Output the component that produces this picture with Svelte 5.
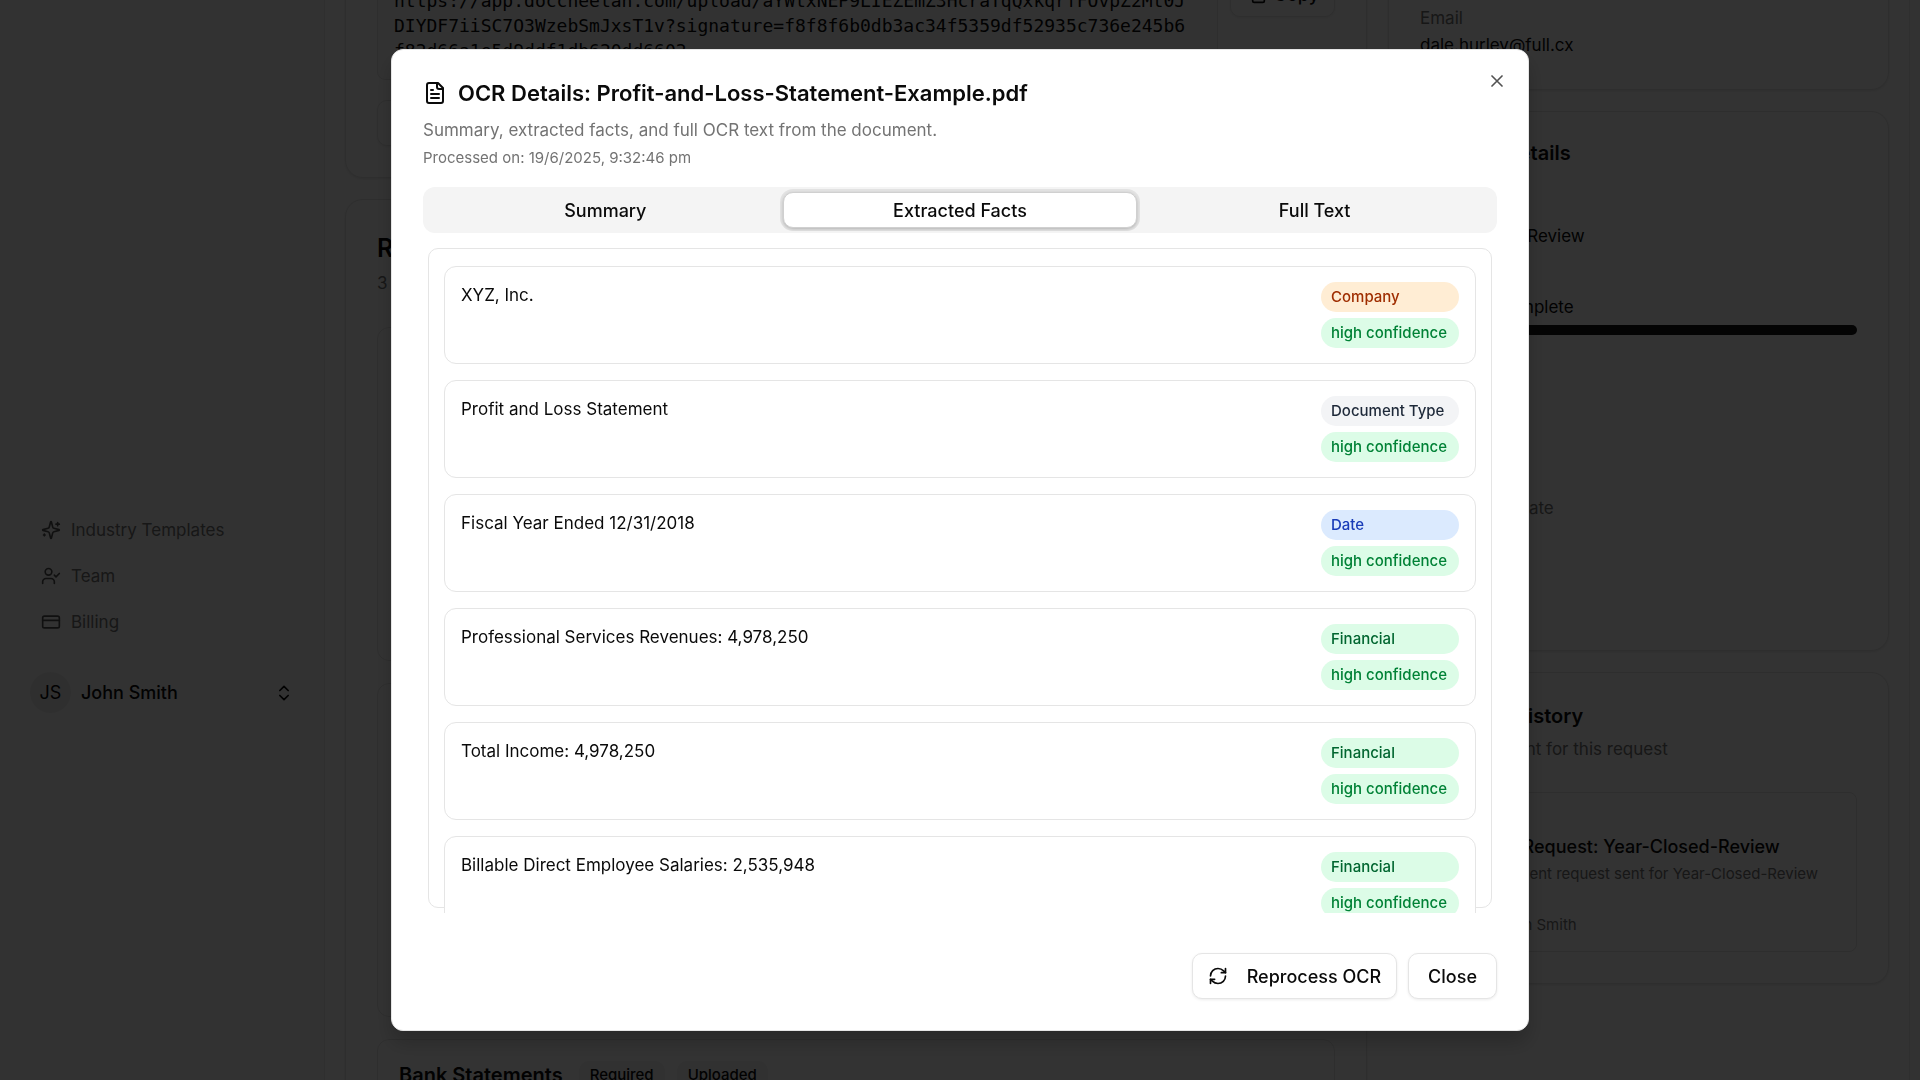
<script lang="ts">
	type Kind = 'company' | 'doctype' | 'date' | 'financial';

	interface Fact {
		text: string;
		kind: Kind;
	}

	const kindLabels: Record<Kind, string> = {
		company: 'Company',
		doctype: 'Document Type',
		date: 'Date',
		financial: 'Financial'
	};

	const facts: Fact[] = [
		{ text: 'XYZ, Inc.', kind: 'company' },
		{ text: 'Profit and Loss Statement', kind: 'doctype' },
		{ text: 'Fiscal Year Ended 12/31/2018', kind: 'date' },
		{ text: 'Professional Services Revenues: 4,978,250', kind: 'financial' },
		{ text: 'Total Income: 4,978,250', kind: 'financial' },
		{ text: 'Billable Direct Employee Salaries: 2,535,948', kind: 'financial' }
	];

	const tabs = ['Summary', 'Extracted Facts', 'Full Text'];
	let activeTab = $state('Extracted Facts');

	const uploadUrl =
		'https://app.doccheetah.com/upload/aYWtxNEP9LIEZEmZ3HcraTqQxkqrfFOvpZ2Mt0JDIYDF7iiSC7O3WzebSmJxsT1v?signature=f8f8f6b0db3ac34f5359df52935c736e245b6f82d66a1e5d9ddf1db620dd6602';
</script>

<div class="page">
	<aside class="sidebar">
		<div class="sidebar-inner">
			<nav>
				<a href="#templates">
					<svg class="icon" viewBox="0 0 24 24">
						<path d="M9.937 15.5A2 2 0 0 0 8.5 14.063l-6.135-1.582a.5.5 0 0 1 0-.962L8.5 9.936A2 2 0 0 0 9.937 8.5l1.582-6.135a.5.5 0 0 1 .963 0L14.063 8.5A2 2 0 0 0 15.5 9.937l6.135 1.581a.5.5 0 0 1 0 .964L15.5 14.063a2 2 0 0 0-1.437 1.437l-1.582 6.135a.5.5 0 0 1-.963 0z" />
						<path d="M20 3v4M22 5h-4M4 17v2M5 18H3" />
					</svg>
					Industry Templates
				</a>
				<a href="#team">
					<svg class="icon" viewBox="0 0 24 24">
						<path d="m16 11 2 2 4-4M16 21v-2a4 4 0 0 0-4-4H6a4 4 0 0 0-4 4v2" />
						<circle cx="9" cy="7" r="4" />
					</svg>
					Team
				</a>
				<a href="#billing">
					<svg class="icon" viewBox="0 0 24 24">
						<rect x="2" y="5" width="20" height="14" rx="2" />
						<path d="M2 10h20" />
					</svg>
					Billing
				</a>
			</nav>
			<button class="user">
				<span class="avatar">JS</span>
				<span class="user-name">John Smith</span>
				<svg class="icon" viewBox="0 0 24 24">
					<path d="m7 15 5 5 5-5M7 9l5-5 5 5" />
				</svg>
			</button>
		</div>
	</aside>

	<main>
		<div class="column">
			<section class="card">
				<div class="link-row">
					<code>{uploadUrl}</code>
					<button class="btn">
						<svg class="icon" viewBox="0 0 24 24">
							<rect x="8" y="8" width="14" height="14" rx="2" />
							<path d="M4 16c-1.100 0-2-.9-2-2V4c0-1.100.9-2 2-2h10c1.100 0 2 .9 2 2" />
						</svg>
						Copy
					</button>
				</div>
				<button class="btn link-action">Send</button>
			</section>

			<section class="card">
				<h2>Requested Documents</h2>
				<p class="count">3 documents</p>
				<div class="documents">
					<div class="document"></div>
					<div class="document"></div>
					<div class="document">
						<h3>Bank Statements</h3>
						<span class="tag">Required</span>
						<span class="tag">Uploaded</span>
					</div>
				</div>
			</section>
		</div>

		<div class="column">
			<section class="card contact">
				<p>Dale Hurley</p>
				<dl>
					<div><dt>Email</dt><dd>dale.hurley@full.cx</dd></div>
				</dl>
			</section>

			<section class="card details">
				<h3>Request Details</h3>
				<dl>
					<div><dt>Title</dt><dd>Year-Closed-Review</dd></div>
					<div>
						<dt>Progress</dt>
						<dd>Requests complete</dd>
						<div class="progress"></div>
					</div>
					<div><dt>Status</dt><dd>Open</dd></div>
					<div><dt>Created</dt><dd>19/6/2025</dd></div>
					<div><dt>Completion Date</dt><dd>19/7/2025</dd></div>
					<div><dt>Reminders</dt><dd>On</dd></div>
				</dl>
			</section>

			<section class="card history">
				<h3>Message History</h3>
				<p class="card-desc">Messages sent for this request</p>
				<article class="message">
					<h4>New Request: Year-Closed-Review</h4>
					<p>Document request sent for Year-Closed-Review</p>
					<p class="sender">to John Smith</p>
				</article>
			</section>
		</div>
	</main>
</div>

<div class="overlay">
	<div class="dialog" role="dialog" aria-modal="true" aria-labelledby="dialog-title">
		<button class="dismiss" aria-label="Close dialog">
			<svg class="icon" viewBox="0 0 24 24"><path d="M18 6 6 18M6 6l12 12" /></svg>
		</button>

		<header>
			<h1 id="dialog-title">
				<svg class="icon title-icon" viewBox="0 0 24 24">
					<path d="M15 2H6a2 2 0 0 0-2 2v16a2 2 0 0 0 2 2h12a2 2 0 0 0 2-2V7z" />
					<path d="M14 2v4a2 2 0 0 0 2 2h4M10 9H8M16 13H8M16 17H8" />
				</svg>
				OCR Details: Profit-and-Loss-Statement-Example.pdf
			</h1>
			<p class="description">Summary, extracted facts, and full OCR text from the document.</p>
			<p class="processed">Processed on: 19/6/2025, 9:32:46 pm</p>
		</header>

		<div class="tabs" role="tablist">
			{#each tabs as tab}
				<button
					role="tab"
					class:active={tab === activeTab}
					aria-selected={tab === activeTab}
					onclick={() => (activeTab = tab)}
				>
					{tab}
				</button>
			{/each}
		</div>

		<div class="panel">
			<div class="frame">
				{#each facts as fact}
					<div class="fact">
						<p>{fact.text}</p>
						<div class="badges">
							<span class="badge {fact.kind}">{kindLabels[fact.kind]}</span>
							<span class="badge confidence">high confidence</span>
						</div>
					</div>
				{/each}
			</div>
		</div>

		<footer>
			<button class="btn reprocess">
				<svg class="icon" viewBox="0 0 24 24">
					<path d="M3 12a9 9 0 0 1 9-9 9.750 9.750 0 0 1 6.740 2.740L21 8" />
					<path d="M21 3v5h-5M21 12a9 9 0 0 1-9 9 9.750 9.750 0 0 1-6.740-2.740L3 16" />
					<path d="M8 16H3v5" />
				</svg>
				Reprocess OCR
			</button>
			<button class="btn">Close</button>
		</footer>
	</div>
</div>

<style>
	:global(body) {
		font-family: Inter, 'Liberation Sans', sans-serif;
		font-size: 17px;
		line-height: 25px;
		color: #0a0a0a;
		background: #fafafa;
	}

	h1,
	h2,
	h3,
	h4,
	p,
	dl,
	dd {
		margin: 0;
	}

	button {
		font: inherit;
		font-size: 18px;
		color: inherit;
		cursor: pointer;
	}

	.icon {
		width: 20px;
		height: 20px;
		flex: none;
		fill: none;
		stroke: currentColor;
		stroke-width: 2;
		stroke-linecap: round;
		stroke-linejoin: round;
	}

	.btn {
		display: inline-flex;
		align-items: center;
		justify-content: center;
		height: 46px;
		box-sizing: border-box;
		padding: 0 19px;
		font-weight: 500;
		background: #fff;
		border: 1px solid #e5e5e5;
		border-radius: 10px;
		box-shadow: 0 1px 3px rgba(0, 0, 0, 0.08);
	}

	/* Request page behind the dialog */
	.page {
		display: flex;
		height: 100vh;
		overflow: hidden;
	}

	.sidebar {
		width: 324px;
		flex: none;
	}

	.sidebar-inner {
		display: flex;
		flex-direction: column;
		justify-content: flex-end;
		gap: 27px;
		height: 68vh;
		box-sizing: border-box;
		padding: 0 30px 21px;
	}

	nav a {
		display: flex;
		align-items: center;
		gap: 10px;
		height: 46px;
		padding: 0 11px;
		color: #737373;
		text-decoration: none;
	}

	nav .icon {
		color: #525252;
	}

	.user {
		display: flex;
		align-items: center;
		gap: 10px;
		padding: 0;
		background: none;
		border: 0;
	}

	.avatar {
		display: grid;
		place-items: center;
		width: 41px;
		height: 41px;
		border-radius: 50%;
		background: #ebebeb;
	}

	.user-name {
		flex: 1;
		font-weight: 500;
		text-align: left;
	}

	main {
		flex: 1;
		display: grid;
		grid-template-columns: minmax(0, 1fr) 501px;
		align-items: start;
		gap: 21px;
		margin: -82px 10px 0 0;
		padding: 21px 20px;
		background: #fff;
		border: solid #ececec;
		border-width: 0 1px;
	}

	.column {
		display: grid;
		gap: 21px;
	}

	.card {
		padding: 31px;
		background: #fff;
		border: 1px solid #e5e5e5;
		border-radius: 18px;
		box-shadow: 0 1px 3px rgba(0, 0, 0, 0.1);
	}

	.link-row {
		display: flex;
		align-items: flex-start;
		gap: 12px;
	}

	.link-row .btn {
		gap: 8px;
		padding: 0 15px;
	}

	code {
		flex: 1;
		padding: 16px 24px 16px 16px;
		font-family: 'DejaVu Sans Mono', monospace;
		font-size: 18px;
		word-break: break-all;
		background: #f8f8f8;
		border: 1px solid #e5e5e5;
		border-radius: 8px;
	}

	.link-action {
		margin-top: 20px;
	}

	h2 {
		font-size: 25px;
		line-height: 34px;
		font-weight: 600;
	}

	h3 {
		font-size: 20px;
		line-height: 20px;
		font-weight: 600;
	}

	.count {
		margin-top: 6px;
		color: #737373;
	}

	.documents {
		display: grid;
		gap: 22px;
		margin-top: 31px;
	}

	.document {
		display: flex;
		align-items: flex-start;
		gap: 12px;
		height: 334px;
		box-sizing: border-box;
		padding: 21px;
		border: 1px solid #e5e5e5;
		border-radius: 12px;
	}

	.document h3 {
		margin-right: 4px;
		line-height: 28px;
	}

	.tag {
		padding: 0 11px;
		font-size: 15px;
		line-height: 28px;
		font-weight: 500;
		border-radius: 10px;
		background: #f2f2f2;
	}

	.contact {
		display: grid;
		gap: 10px;
	}

	dl {
		display: grid;
		gap: 19px;
	}

	dt {
		margin-bottom: 2px;
		color: #737373;
	}

	.progress {
		height: 10px;
		margin-top: 5px;
		border-radius: 5px;
		background: #171717;
	}

	.details dl {
		margin-top: 34px;
	}

	.history h3 {
		line-height: 24px;
	}

	.card-desc {
		margin-top: 9px;
		color: #737373;
	}

	.message {
		margin-top: 30px;
		padding: 41px 31px 16px 58px;
		border: 1px solid #e5e5e5;
		border-radius: 8px;
		white-space: nowrap;
	}

	.message h4 {
		font-size: 18px;
		font-weight: 500;
	}

	.message p {
		margin-top: 4px;
		font-size: 15px;
		line-height: 21px;
		color: #737373;
	}

	.message .sender {
		margin-top: 30px;
	}

	/* Dialog */
	.overlay {
		position: fixed;
		inset: 0;
		display: grid;
		place-items: center;
		background: rgba(0, 0, 0, 0.8);
	}

	.dialog {
		position: relative;
		display: flex;
		flex-direction: column;
		width: min(1138px, calc(100vw - 40px));
		height: calc(100vh - 98px);
		box-sizing: border-box;
		padding: 31px;
		background: #fff;
		border: 1px solid #e5e5e5;
		border-radius: 12px;
		box-shadow: 0 12px 20px rgba(0, 0, 0, 0.2);
	}

	.dismiss {
		position: absolute;
		top: 21px;
		right: 21px;
		display: flex;
		padding: 0;
		background: none;
		border: 0;
		opacity: 0.7;
	}

	h1 {
		display: flex;
		align-items: center;
		gap: 11px;
		font-size: 22px;
		line-height: 24px;
		font-weight: 600;
	}

	.title-icon {
		width: 24px;
		height: 24px;
	}

	.description {
		margin-top: 13px;
		color: #737373;
	}

	.processed {
		margin-top: 5px;
		font-size: 15px;
		line-height: 20px;
		color: #737373;
	}

	.tabs {
		display: grid;
		grid-template-columns: repeat(3, 1fr);
		flex: none;
		height: 46px;
		box-sizing: border-box;
		margin-top: 19px;
		padding: 5px;
		border-radius: 12px;
		background: #f4f4f4;
	}

	.tabs button {
		padding: 0;
		font-weight: 500;
		background: none;
		border: 1px solid transparent;
		border-radius: 10px;
	}

	.tabs .active {
		background: #fff;
		border-color: #d0d0d0;
		box-shadow:
			0 1px 3px rgba(0, 0, 0, 0.2),
			0 0 0 3px rgba(0, 0, 0, 0.07);
	}

	/* Cards run past the frame and are cut at the panel's edge. */
	.panel {
		flex: 1;
		min-height: 0;
		overflow: hidden;
		padding: 15px 5px 5px;
	}

	.frame {
		display: grid;
		align-content: start;
		gap: 16px;
		height: 100%;
		box-sizing: border-box;
		padding: 17px 15px;
		border: 1px solid #e5e5e5;
		border-radius: 10px;
	}

	.fact {
		display: flex;
		justify-content: space-between;
		align-items: flex-start;
		padding: 15px 16px;
		line-height: 27px;
		background: #fff;
		border: 1px solid #e5e5e5;
		border-radius: 12px;
	}

	.badges {
		display: grid;
		gap: 6px;
		min-width: 138px;
	}

	.badge {
		padding: 0 10px;
		font-size: 15px;
		line-height: 30px;
		font-weight: 500;
		border-radius: 15px;
	}

	.company {
		color: #9f2d00;
		background: #ffedd4;
	}

	.doctype {
		color: #1e2939;
		background: #f3f4f6;
	}

	.date {
		color: #193cb8;
		background: #dbeafe;
	}

	.financial {
		color: #016630;
		background: #dcfce7;
	}

	.confidence {
		color: #008236;
		background: #dcfce7;
	}

	footer {
		display: flex;
		justify-content: flex-end;
		gap: 11px;
		margin-top: 40px;
	}

	.reprocess {
		gap: 19px;
		padding: 0 15px;
	}
</style>
